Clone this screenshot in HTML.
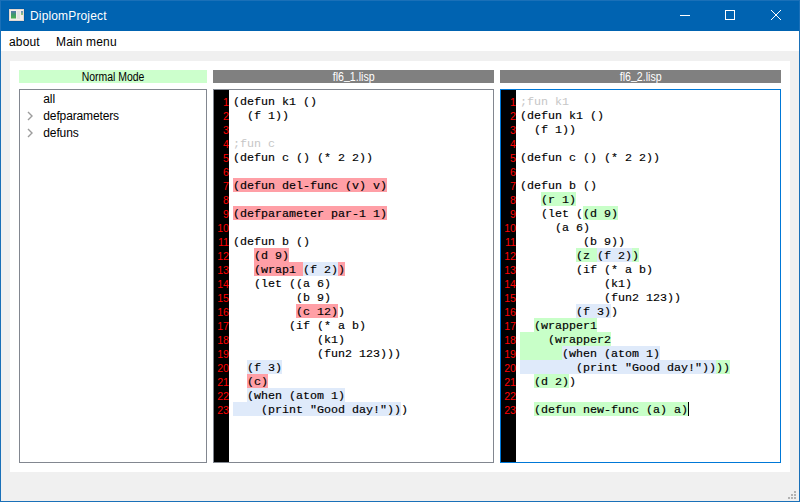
<!DOCTYPE html>
<html><head><meta charset="utf-8"><title>DiplomProject</title>
<style>
html,body{margin:0;padding:0;}
body{width:800px;height:502px;overflow:hidden;background:#f0f0f0;font-family:"Liberation Sans","DejaVu Sans",sans-serif;font-size:12px;color:#000;position:relative;}
.abs{position:absolute;}
#win{left:0;top:0;width:798px;height:500px;border:1px solid #1a70b8;box-sizing:content-box;}
#title{left:0;top:0;width:800px;height:31px;background:#0063b1;}
#title .t{left:30px;top:1px;line-height:31px;color:#fff;font-size:12px;letter-spacing:0.15px;white-space:nowrap;}
#menubar{left:1px;top:31px;width:798px;height:20px;background:#fff;}
#menubar span{position:absolute;top:1px;line-height:20px;font-size:12px;letter-spacing:0.15px;white-space:nowrap;}
#central{left:10px;top:61px;width:780px;height:411px;background:#fff;}
.hdr{top:70px;height:13px;line-height:13px;text-align:center;font-size:12px;white-space:nowrap;}
.hdr span{display:inline-block;position:relative;top:0.5px;}
.hdr b{font-weight:normal;position:relative;top:-1.4px;}
#mode{left:19px;width:188px;background:#ccffcc;color:#000;}
#h1{left:213px;width:281px;background:#808080;color:#fff;}
#h2{left:500px;width:281px;background:#808080;color:#fff;}
.box{top:89px;height:372px;border:1px solid #828790;background:#fff;overflow:hidden;}
#tree{left:19px;width:186px;}
#ed1{left:213px;width:279px;}
#ed2{left:500px;width:279px;border-color:#0078d7;}
.gut{position:absolute;left:0;top:0;width:15px;height:372px;background:#000;}
.gut .n{height:14px;line-height:14px;text-align:right;color:#ff0000;font-size:10.6px;}
.gut .pad{height:4.5px;}
.bg{position:absolute;left:19px;top:4px;}
.bg i{position:absolute;height:14px;display:block;}
.code{position:absolute;left:19px;top:5px;font-family:"Liberation Mono","DejaVu Sans Mono",monospace;font-weight:normal;-webkit-text-stroke:0.15px #000;font-size:10.25px;transform:scaleX(1.13821);transform-origin:0 0;}
.ln{height:14px;line-height:14px;white-space:pre;}
.r{background:#ff9fa6;}
.g{background:#c8ffc8;}
.b{background:#dfeafa;}
.c{color:#c6c6c6;-webkit-text-stroke:0;}
.bg i.cur{width:1px;background:#000;}
.ti{position:absolute;left:23.3px;line-height:17px;height:17px;font-size:12px;letter-spacing:-0.13px;white-space:nowrap;}
</style></head><body>
<div id="title" class="abs">
<svg class="abs" style="left:8px;top:8px" width="18" height="15" viewBox="0 0 18 15"><defs><linearGradient id="ga" x1="0" y1="0" x2="0" y2="1"><stop offset="0" stop-color="#5878b0"/><stop offset="0.5" stop-color="#3f9a6a"/><stop offset="1" stop-color="#4cb050"/></linearGradient><linearGradient id="gb" x1="0" y1="0" x2="0" y2="1"><stop offset="0" stop-color="#6a8cc4"/><stop offset="1" stop-color="#9ad070"/></linearGradient></defs><rect x="0.6" y="0.6" width="16" height="13" fill="#00468a" opacity="0.45"/><rect x="1" y="1" width="15" height="12" fill="#f3eeea"/><rect x="1.5" y="1.5" width="14" height="11" fill="none" stroke="#e4d8d0" stroke-width="1"/><rect x="3" y="3" width="5" height="7.5" fill="url(#ga)"/><rect x="9" y="3" width="3" height="8" fill="#e2e2e2"/><rect x="13" y="3" width="2" height="4" fill="url(#gb)"/></svg>
<div class="t abs">DiplomProject</div>
<svg class="abs" style="left:680px;top:10px" width="102" height="11" viewBox="0 0 102 11" fill="none" stroke="#fff" stroke-width="1"><path d="M0 5.5H10"/><rect x="45.5" y="0.5" width="9" height="9"/><path d="M91 0L101 10M101 0L91 10"/></svg>
</div>
<div id="win" class="abs"></div>
<div id="menubar" class="abs"><span style="left:8px">about</span><span style="left:55px">Main menu</span></div>
<div id="central" class="abs"></div>
<div id="mode" class="abs hdr"><span style="transform:scaleX(0.87)">Normal Mode</span></div>
<div id="h1" class="abs hdr"><span style="transform:scaleX(0.885)">fl6<b>_</b>1.lisp</span></div>
<div id="h2" class="abs hdr"><span style="transform:scaleX(0.885)">fl6<b>_</b>2.lisp</span></div>
<div id="tree" class="abs box">
<div class="ti" style="top:1px">all</div>
<div class="ti" style="top:18px">defparameters</div>
<div class="ti" style="top:35px">defuns</div>
<svg class="abs" style="left:7px;top:21px" width="6" height="10" viewBox="0 0 6 10" fill="none" stroke="#9c9c9c" stroke-width="1.4"><path d="M1 1L5 5L1 9"/></svg>
<svg class="abs" style="left:7px;top:38px" width="6" height="10" viewBox="0 0 6 10" fill="none" stroke="#9c9c9c" stroke-width="1.4"><path d="M1 1L5 5L1 9"/></svg>
</div>
<div id="ed1" class="abs box"><div class="gut"><div class="pad"></div>
<div class="n">1</div>
<div class="n">2</div>
<div class="n">3</div>
<div class="n">4</div>
<div class="n">5</div>
<div class="n">6</div>
<div class="n">7</div>
<div class="n">8</div>
<div class="n">9</div>
<div class="n">10</div>
<div class="n">11</div>
<div class="n">12</div>
<div class="n">13</div>
<div class="n">14</div>
<div class="n">15</div>
<div class="n">16</div>
<div class="n">17</div>
<div class="n">18</div>
<div class="n">19</div>
<div class="n">20</div>
<div class="n">21</div>
<div class="n">22</div>
<div class="n">23</div>
</div>
<div class="bg"><i class="r" style="left:0px;top:84px;width:154px"></i><i class="r" style="left:0px;top:112px;width:154px"></i><i class="r" style="left:21px;top:154px;width:35px"></i><i class="r" style="left:21px;top:168px;width:49px"></i><i class="b" style="left:70px;top:168px;width:35px"></i><i class="r" style="left:105px;top:168px;width:7px"></i><i class="r" style="left:63px;top:210px;width:42px"></i><i class="b" style="left:14px;top:266px;width:35px"></i><i class="r" style="left:14px;top:280px;width:21px"></i><i class="b" style="left:14px;top:294px;width:98px"></i><i class="b" style="left:0px;top:308px;width:168px"></i></div>
<div class="code">
<div class="ln">(defun k1 ()</div>
<div class="ln">  (f 1))</div>
<div class="ln"></div>
<div class="ln"><span class="c">;fun c</span></div>
<div class="ln">(defun c () (* 2 2))</div>
<div class="ln"></div>
<div class="ln">(defun del-func (v) v)</div>
<div class="ln"></div>
<div class="ln">(defparameter par-1 1)</div>
<div class="ln"></div>
<div class="ln">(defun b ()</div>
<div class="ln">   (d 9)</div>
<div class="ln">   (wrap1 (f 2))</div>
<div class="ln">   (let ((a 6)</div>
<div class="ln">         (b 9)</div>
<div class="ln">         (c 12))</div>
<div class="ln">        (if (* a b)</div>
<div class="ln">            (k1)</div>
<div class="ln">            (fun2 123)))</div>
<div class="ln">  (f 3)</div>
<div class="ln">  (c)</div>
<div class="ln">  (when (atom 1)</div>
<div class="ln">    (print "Good day!")))</div>
</div>
</div>
<div id="ed2" class="abs box"><div class="gut"><div class="pad"></div>
<div class="n">1</div>
<div class="n">2</div>
<div class="n">3</div>
<div class="n">4</div>
<div class="n">5</div>
<div class="n">6</div>
<div class="n">7</div>
<div class="n">8</div>
<div class="n">9</div>
<div class="n">10</div>
<div class="n">11</div>
<div class="n">12</div>
<div class="n">13</div>
<div class="n">14</div>
<div class="n">15</div>
<div class="n">16</div>
<div class="n">17</div>
<div class="n">18</div>
<div class="n">19</div>
<div class="n">20</div>
<div class="n">21</div>
<div class="n">22</div>
<div class="n">23</div>
</div>
<div class="bg"><i class="g" style="left:21px;top:98px;width:35px"></i><i class="g" style="left:63px;top:112px;width:35px"></i><i class="g" style="left:56px;top:154px;width:21px"></i><i class="b" style="left:77px;top:154px;width:35px"></i><i class="g" style="left:112px;top:154px;width:7px"></i><i class="b" style="left:56px;top:210px;width:35px"></i><i class="g" style="left:14px;top:224px;width:63px"></i><i class="g" style="left:0px;top:238px;width:91px"></i><i class="g" style="left:0px;top:252px;width:42px"></i><i class="b" style="left:42px;top:252px;width:98px"></i><i class="b" style="left:0px;top:266px;width:196px"></i><i class="g" style="left:196px;top:266px;width:14px"></i><i class="g" style="left:14px;top:280px;width:35px"></i><i class="g" style="left:14px;top:308px;width:154px"></i><i class="cur" style="left:168px;top:308px"></i></div>
<div class="code">
<div class="ln"><span class="c">;fun k1</span></div>
<div class="ln">(defun k1 ()</div>
<div class="ln">  (f 1))</div>
<div class="ln"></div>
<div class="ln">(defun c () (* 2 2))</div>
<div class="ln"></div>
<div class="ln">(defun b ()</div>
<div class="ln">   (r 1)</div>
<div class="ln">   (let ((d 9)</div>
<div class="ln">     (a 6)</div>
<div class="ln">         (b 9))</div>
<div class="ln">        (z (f 2))</div>
<div class="ln">        (if (* a b)</div>
<div class="ln">            (k1)</div>
<div class="ln">            (fun2 123))</div>
<div class="ln">        (f 3))</div>
<div class="ln">  (wrapper1</div>
<div class="ln">    (wrapper2</div>
<div class="ln">      (when (atom 1)</div>
<div class="ln">        (print "Good day!"))))</div>
<div class="ln">  (d 2))</div>
<div class="ln"></div>
<div class="ln">  (defun new-func (a) a)</div>
</div>
</div>
<svg class="abs" style="left:788px;top:491px" width="10" height="10" viewBox="0 0 10 10" fill="#b2b2b2"><rect x="6" y="0" width="2" height="2"/><rect x="3" y="3" width="2" height="2"/><rect x="6" y="3" width="2" height="2"/><rect x="0" y="6" width="2" height="2"/><rect x="3" y="6" width="2" height="2"/><rect x="6" y="6" width="2" height="2"/></svg>
</body></html>
